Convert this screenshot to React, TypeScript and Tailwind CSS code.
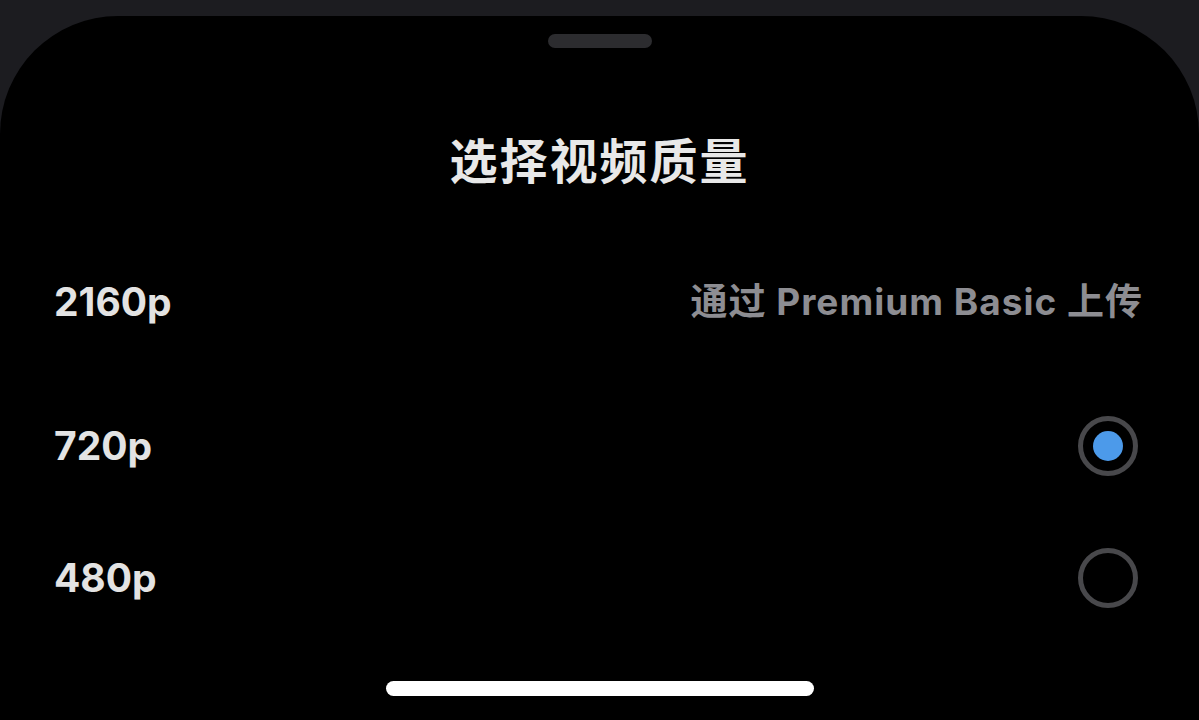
/**
 * 视频质量选择 - 底部弹出面板
 */

const FONT = "font-['Inter','Noto_Sans_CJK_SC',sans-serif]";

interface QualityRowProps {
  label: string;
  className?: string;
  children?: React.ReactNode;
}

function QualityRow({ label, className = '', children }: QualityRowProps) {
  return (
    <div className={`flex items-center justify-between h-[100px] pl-[54px] pr-[56px] ${className}`}>
      <span className="text-[39px] font-bold text-[#e3e3e3] tracking-[0px]">{label}</span>
      {children}
    </div>
  );
}

function Radio({ checked }: { checked?: boolean }) {
  return (
    <div className="mr-[5px] w-[60px] h-[60px] rounded-full border-[5px] border-[#48484b] flex items-center justify-center">
      {checked && <div className="w-[30px] h-[30px] rounded-full bg-[#4c9aea]" />}
    </div>
  );
}

export default function App() {
  return (
    <div className={`w-full h-[720px] bg-[#1c1c20] pt-[16px] overflow-hidden ${FONT}`}>
      <div className="h-[704px] bg-black rounded-t-[118px] flex flex-col">
        {/* Grabber */}
        <div className="mt-[18px] mx-auto w-[104px] h-[14px] rounded-full bg-[#2c2c2f]" />

        {/* Título */}
        <div className="mt-[82px] h-[64px] flex items-center justify-center">
          <h1 className="text-[48px] font-bold text-[#e8e8e8] tracking-[2px]">选择视频质量</h1>
        </div>

        {/* Opciones */}
        <QualityRow label="2160p" className="mt-[58px]">
          <span className="text-[37px] font-bold text-[#8d8d92] tracking-[1px]">通过 Premium Basic 上传</span>
        </QualityRow>
        <QualityRow label="720p" className="mt-[44px]">
          <Radio checked />
        </QualityRow>
        <QualityRow label="480p" className="mt-[32px]">
          <Radio />
        </QualityRow>

        {/* Home indicator */}
        <div className="mt-[53px] mx-auto w-[428px] h-[15px] rounded-full bg-white" />
      </div>
    </div>
  );
}
